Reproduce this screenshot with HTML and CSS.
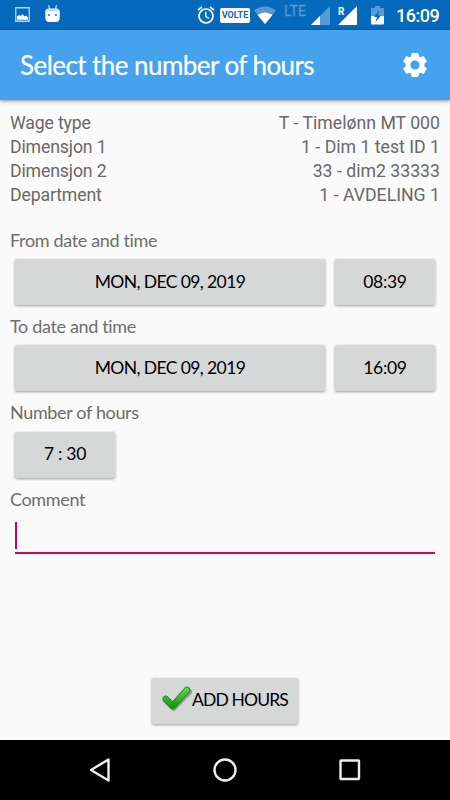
FILE: index.html
```html
<!DOCTYPE html>
<html lang="en">
<head>
<meta charset="utf-8">
<title>Select the number of hours</title>
<link rel="stylesheet" href="styles.css">
</head>
<body>
<div class="screen">
  <div class="status">
    <svg class="i-picture" width="15" height="15" viewBox="0 0 15 15"><path d="M.75.75h13.5v13.5H.75z" fill="none" stroke="#b5d6f0" stroke-width="1.3"/><path d="M2 12.800V9.500l2-1.500 1.500 1 2-2 2 2.500 1.500-1 2 2v2.300z" fill="#fff"/></svg>
    <svg class="i-droid" width="15" height="18" viewBox="0 0 15 18"><path d="M3.500 0l1 4M11.500 0l-1 4" stroke="#b5d6f0" stroke-width="1.200"/><path d="M.3 6.500Q.5 3.500 4 3.500h7q3.500 0 3.700 3v6q0 4.500-4 4.500H4.300q-4 0-4-4.500z" fill="#fff"/><path d="M1 6.200Q1.500 4 4 4h7q2.500 0 3 2.200z" fill="#c3dcf2"/><path d="M3 9h2v2H3zM10 9h2v2h-2z" fill="#5798cf"/></svg>
    <span class="grow"></span>
    <svg class="i-alarm" width="18" height="18" viewBox="0 0 18 18" fill="none" stroke="#fff"><circle cx="9" cy="10" r="7" stroke-width="1.700"/><path d="M1 4.200L5 1M17 4.200L13 1" stroke-width="1.700"/><path d="M8.800 5.800v4.700l3.300 2" stroke-width="1.400"/></svg>
    <span class="volte">VOLTE</span>
    <svg class="i-wifi" width="22" height="18" viewBox="0 0 22 18"><path d="M0 4.500Q11-3.500 22 4.500L11 18z" fill="#5799d0"/><path d="M3.500 9Q11 3.800 18.500 9L11 18z" fill="#fff"/></svg>
    <span class="lte">LTE</span>
    <svg class="i-signal" width="19" height="19" viewBox="0 0 19 19"><path d="M19 0v19H0z" fill="#5799d0"/><path d="M9 10v9H0z" fill="#fff"/></svg>
    <span class="roaming"><svg width="19" height="19" viewBox="0 0 19 19"><path d="M19 0v19H0z" fill="#fff"/></svg><b>R</b></span>
    <svg class="i-battery" width="13" height="19" viewBox="0 0 13 19"><path d="M4 0h5v2h4v8H0V2h4z" fill="#5799d0"/><path d="M0 10h13v7.500q0 1-1 1H1q-1 0-1-1z" fill="#fff"/><path d="M8 4.500L3 11h3l-1.500 5L10 9.500H7z" fill="#056abb"/></svg>
    <span class="clock">16:09</span>
  </div>
  <header class="appbar">
    <h1>Select the number of hours</h1>
    <svg width="24" height="24" viewBox="0 0 24 24"><path fill="#fff" stroke="#fff" stroke-linejoin="round" fill-rule="evenodd" d="M9 .5h6l.6 3.200 1.700 1 3.200-1.100 2.900 4.900-2.500 2.100v2.800l2.500 2.100-2.900 4.900-3.200-1.100-1.700 1-.6 3.200H9l-.6-3.200-1.700-1-3.200 1.100L.6 15.500l2.500-2.100v-2.800L.6 8.500l2.900-4.900 3.200 1.100 1.700-1zM12 6.900a5.100 5.100 0 1 0 0 10.200 5.100 5.100 0 1 0 0-10.200z"/></svg>
  </header>
  <main>
    <dl class="details">
      <div><dt>Wage type</dt><dd>T - Timelønn MT 000</dd></div>
      <div><dt>Dimensjon 1</dt><dd>1 - Dim 1 test ID 1</dd></div>
      <div><dt>Dimensjon 2</dt><dd>33 - dim2 33333</dd></div>
      <div><dt>Department</dt><dd>1 - AVDELING 1</dd></div>
    </dl>
    <div class="label from">From date and time</div>
    <div class="row"><button class="date">MON, DEC 09, 2019</button><button class="time">08:39</button></div>
    <div class="label to">To date and time</div>
    <div class="row"><button class="date">MON, DEC 09, 2019</button><button class="time">16:09</button></div>
    <div class="label number">Number of hours</div>
    <div class="row"><button class="time hours">7 : 30</button></div>
    <div class="label comment">Comment</div>
    <div class="input"><span class="caret"></span></div>
    <button class="add">
      <svg width="30" height="26" viewBox="0 0 30 26"><defs><linearGradient id="g" x2="0" y2="1"><stop stop-color="#5bd447"/><stop offset="1" stop-color="#149b10"/></linearGradient></defs><path d="M4.500 15l7 7L27 6" fill="none" stroke="#666" stroke-opacity=".55" stroke-width="6" stroke-linejoin="round" stroke-linecap="round"/><path d="M3.800 13l7 7L25 4" fill="none" stroke="#16830f" stroke-width="6.500" stroke-linejoin="round" stroke-linecap="round"/><path d="M3.800 13l7 7L25 4" fill="none" stroke="url(#g)" stroke-width="5" stroke-linejoin="round" stroke-linecap="round"/></svg>
      <span>ADD HOURS</span>
    </button>
  </main>
  <nav>
    <svg width="22" height="24" viewBox="0 0 22 24"><path d="M19.500 1.500v21L2 12z"/></svg>
    <svg width="24" height="24" viewBox="0 0 24 24"><circle cx="12" cy="12" r="10.500"/></svg>
    <svg width="22" height="22" viewBox="0 0 22 22"><rect x="1.500" y="1.500" width="18.500" height="18.500" rx=".5"/></svg>
  </nav>
</div>
</body>
</html>
```
FILE: styles.css
```css
* { box-sizing: border-box; }
body { margin: 0; }
.screen { width: 450px; height: 800px; display: flex; flex-direction: column; background: #fafafa; font-family: Lato, sans-serif; font-variant-ligatures: none; overflow: hidden; }
svg { display: block; flex: none; }
.status { height: 30px; flex: none; background: #056abb; display: flex; align-items: flex-start; padding: 0 10px 0 15px; color: #fff; font-family: Roboto, sans-serif; }
.i-picture { margin-top: 7px; }
.i-droid { margin: 5px 0 0 15px; }
.grow { flex: 1; }
.i-alarm { margin: 6px 5px 0 0; }
.volte { width: 30px; height: 15px; margin-top: 8px; border-radius: 2px; background: #fff; color: #056abb; font-size: 9px; line-height: 15px; font-weight: 700; text-align: center; }
.i-wifi { margin: 6px 1px 0 4px; }
.lte { width: 23px; margin: 3px 4px 0 7px; font-size: 14px; line-height: 17px; color: #5799d0; -webkit-text-stroke: .3px #5799d0; }
.i-signal { margin-top: 6px; }
.roaming { position: relative; margin: 6px 0 0 8px; }
.roaming b { position: absolute; left: 0; top: 1px; font-size: 10px; line-height: 10px; }
.i-battery { margin: 6px 0 0 14px; }
.clock { width: 44px; margin-left: 12px; font-size: 18px; line-height: 31px; font-weight: 500; white-space: nowrap; letter-spacing: -.5px; }
.appbar { height: 70px; flex: none; background: #46a2ec; box-shadow: 0 1px 4px rgba(0,0,0,.45); display: flex; align-items: center; justify-content: space-between; padding: 0 23px 0 20px; color: #fff; }
h1 { margin: 0; font-size: 26px; font-weight: 400; line-height: 30px; letter-spacing: -.56px; white-space: nowrap; -webkit-text-stroke: .2px #fff; }
main { flex: 1; display: flex; flex-direction: column; padding: 11px 10px 0; }
.details { margin: 0; font: 17.7px/24px Roboto, sans-serif; color: #696969; }
.details div { display: flex; justify-content: space-between; }
dt { letter-spacing: -.15px; }
dd { margin: 0; }
.label { height: 24px; font-size: 18px; line-height: 24px; letter-spacing: -.35px; color: #6d6d6d; }
.from { margin-top: 21px; }
.to, .number, .comment { margin-top: 9px; }
.row { display: flex; gap: 10px; padding: 0 5px; margin-top: 7.2px; }
button { border: 0; padding: 0; border-radius: 2px; background: #d6d8d7; box-shadow: 0 1px 3px rgba(0,0,0,.38); height: 46px; font: 17.5px/22px Lato, sans-serif; letter-spacing: -.6px; color: #000; white-space: nowrap; }
.row button { padding-bottom: 1px; }
.date { width: 310px; }
.time { width: 100px; letter-spacing: -.3px; }
.input { margin: 11px 5px 0; height: 32px; border-bottom: 2px solid #d8004f; }
.caret { display: block; width: 2px; height: 27px; background: #d8004f; }
.add { align-self: center; width: 146px; margin-top: 124px; display: flex; align-items: center; padding: 0 0 2px 10px; letter-spacing: -.85px; }
.add svg { margin-bottom: 2px; }
nav { height: 60px; flex: none; background: #000; display: flex; align-items: center; justify-content: space-between; padding: 0 89px; }
nav svg { fill: none; stroke: #eee; stroke-width: 2.4; stroke-linejoin: round; }
```
